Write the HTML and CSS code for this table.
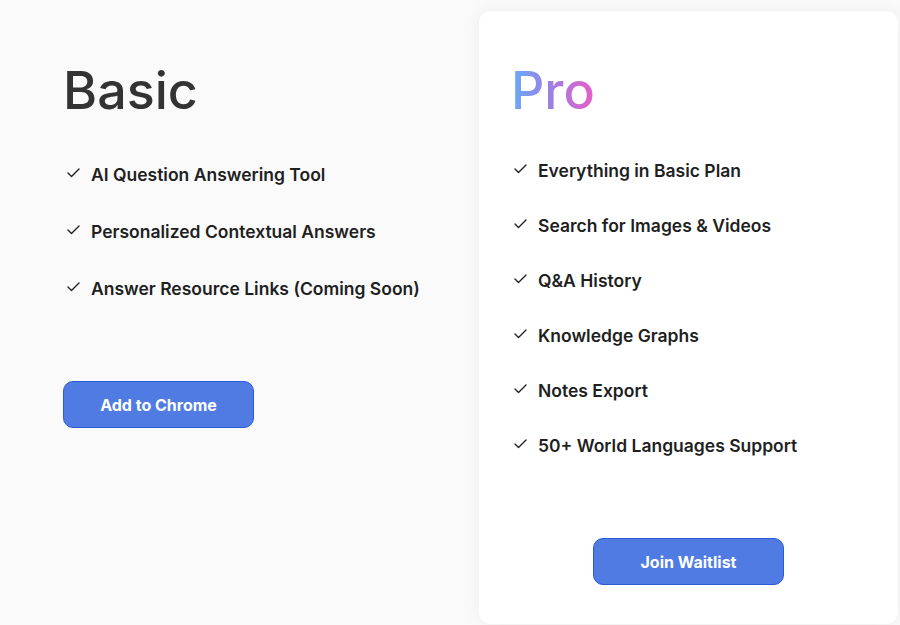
FILE: index.html
```html
<!DOCTYPE html>
<html lang="en">
<head>
<meta charset="utf-8">
<title>Pricing</title>
<link rel="stylesheet" href="styles.css">
</head>
<body>
<main class="pricing">
  <section class="plan plan-basic">
    <h2 class="plan-title">Basic</h2>
    <ul class="features features-basic">
      <li><svg class="check" viewBox="0 0 13 10" width="13" height="10"><polyline points="1,5 4.5,8.5 12,1"/></svg><span>AI Question Answering Tool</span></li>
      <li><svg class="check" viewBox="0 0 13 10" width="13" height="10"><polyline points="1,5 4.5,8.5 12,1"/></svg><span>Personalized Contextual Answers</span></li>
      <li><svg class="check" viewBox="0 0 13 10" width="13" height="10"><polyline points="1,5 4.5,8.5 12,1"/></svg><span>Answer Resource Links (Coming Soon)</span></li>
    </ul>
    <a class="btn btn-basic" href="#">Add to Chrome</a>
  </section>
  <section class="plan plan-pro">
    <h2 class="plan-title plan-title-pro">Pro</h2>
    <ul class="features features-pro">
      <li><svg class="check" viewBox="0 0 13 10" width="13" height="10"><polyline points="1,5 4.5,8.5 12,1"/></svg><span>Everything in Basic Plan</span></li>
      <li><svg class="check" viewBox="0 0 13 10" width="13" height="10"><polyline points="1,5 4.5,8.5 12,1"/></svg><span>Search for Images &amp; Videos</span></li>
      <li><svg class="check" viewBox="0 0 13 10" width="13" height="10"><polyline points="1,5 4.5,8.5 12,1"/></svg><span>Q&amp;A History</span></li>
      <li><svg class="check" viewBox="0 0 13 10" width="13" height="10"><polyline points="1,5 4.5,8.5 12,1"/></svg><span>Knowledge Graphs</span></li>
      <li><svg class="check" viewBox="0 0 13 10" width="13" height="10"><polyline points="1,5 4.5,8.5 12,1"/></svg><span>Notes Export</span></li>
      <li><svg class="check" viewBox="0 0 13 10" width="13" height="10"><polyline points="1,5 4.5,8.5 12,1"/></svg><span>50+ World Languages Support</span></li>
    </ul>
    <a class="btn btn-pro" href="#">Join Waitlist</a>
  </section>
</main>
</body>
</html>
```
FILE: styles.css
```css
* { box-sizing: border-box; }

html, body {
  margin: 0;
  padding: 0;
  background: #fafafa;
  font-family: Inter, "Noto Sans", "Liberation Sans", sans-serif;
  color: #1f1f1f;
}

.pricing {
  display: flex;
  align-items: flex-start;
  height: 625px;
  overflow: hidden;
}

.plan {
  display: flex;
  flex-direction: column;
  align-items: flex-start;
}

.plan-basic {
  width: 479px;
  padding: 65px 0 0 63px;
}

.plan-pro {
  margin-top: 11px;
  width: 419px;
  height: 613px;
  padding: 54px 31px 0 31px;
  background: #ffffff;
  border-radius: 12px;
  box-shadow: 0 0 18px rgba(0, 0, 0, 0.06);
}

.plan-title {
  margin: 0;
  font-size: 52px;
  line-height: 52px;
  font-weight: 500;
  color: #333333;
  letter-spacing: 0;
}

.plan-title-pro {
  margin-left: 1px;
  background: linear-gradient(90deg, #66acf7 0%, #9b80e4 45%, #e85dc6 100%);
  -webkit-background-clip: text;
  background-clip: text;
  color: transparent;
}

.features {
  list-style: none;
  margin: 0;
  padding: 0;
  display: flex;
  flex-direction: column;
}

.features li {
  display: flex;
  align-items: flex-start;
  gap: 11px;
  padding-left: 4px;
  font-size: 17.5px;
  line-height: 24px;
  font-weight: 600;
  letter-spacing: 0;
  color: #1f1f1f;
}

.features-basic {
  margin-top: 46px;
  gap: 33px;
}

.features-pro {
  margin-top: 42px;
  gap: 31px;
}

.check {
  flex: none;
  margin-top: 5px;
  fill: none;
  stroke: #222222;
  stroke-width: 1.4;
  stroke-linecap: round;
  stroke-linejoin: round;
}

.btn {
  display: flex;
  align-items: center;
  justify-content: center;
  width: 191px;
  height: 47px;
  border-radius: 10px;
  background: #4f7be3;
  border: 1px solid #2a5ad4;
  color: #ffffff;
  font-size: 16px;
  font-weight: 700;
  letter-spacing: 0;
  text-decoration: none;
}

.btn-basic {
  margin-top: 80px;
}

.btn-pro {
  margin-top: 80px;
  align-self: center;
}
```
